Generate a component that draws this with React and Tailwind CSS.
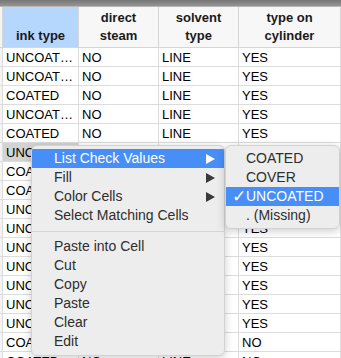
import React from 'react';

const rows = [
  ['UNCOAT…', 'NO', 'LINE', 'YES'],
  ['UNCOAT…', 'NO', 'LINE', 'YES'],
  ['COATED', 'NO', 'LINE', 'YES'],
  ['UNCOAT…', 'NO', 'LINE', 'YES'],
  ['COATED', 'NO', 'LINE', 'YES'],
  ['UNCOAT…', 'NO', 'LINE', 'YES'],
  ['COATED', 'NO', 'LINE', 'YES'],
  ['COATED', 'NO', 'LINE', 'YES'],
  ['UNCOAT…', 'NO', 'LINE', 'YES'],
  ['UNCOAT…', 'NO', 'LINE', 'YES'],
  ['UNCOAT…', 'NO', 'LINE', 'YES'],
  ['UNCOAT…', 'NO', 'LINE', 'YES'],
  ['UNCOAT…', 'NO', 'LINE', 'YES'],
  ['UNCOAT…', 'NO', 'LINE', 'YES'],
  ['UNCOAT…', 'NO', 'LINE', 'YES'],
  ['COATED', 'NO', 'LINE', 'NO'],
  ['COATED', 'NO', 'LINE', 'NO'],
];

const headers = [
  ['ink type'],
  ['direct', 'steam'],
  ['solvent', 'type'],
  ['type on', 'cylinder'],
];

const Arrow = ({ white }) => (
  <svg width="9" height="10" viewBox="0 0 9 10">
    <path d="M0 0 L9 5 L0 10 Z" fill={white ? '#ffffff' : '#3a3a3a'} />
  </svg>
);

const MenuItem = ({ label, sub, active }) => (
  <div
    className={`h-[19px] flex items-center pl-[22px] pr-[9px] ${
      active ? 'bg-[#478ef6] text-white' : 'text-[#2e2e2e]'
    }`}
  >
    <span className="flex-1">{label}</span>
    {sub && <Arrow white={active} />}
  </div>
);

export default function App() {
  return (
    <div
      className="relative w-[341px] h-[358px] overflow-hidden bg-white text-[13px]"
      style={{ fontFamily: '"Liberation Sans", Arial, sans-serif' }}
    >
      {/* Window top bar */}
      <div className="h-[7px] bg-gradient-to-b from-[#767676] to-[#959595] border-b border-[#b8b8b8]" />

      {/* Table */}
      <div className="grid grid-cols-[3px_76px_80px_80px_102px]">
        <div className="h-[41px] bg-[#f4f4f4] border-r border-b border-[#d6d6d6]" />
        {headers.map((h, i) => (
          <div
            key={i}
            className={`h-[41px] flex flex-col justify-end items-center pb-[2px] font-bold leading-[18px] text-[#1a1a1a] border-r border-b border-[#d6d6d6] ${
              i === 0 ? 'bg-[#b5d6fd]' : 'bg-[#f7f7f7]'
            }`}
          >
            {h.map((line) => (
              <span key={line}>{line}</span>
            ))}
          </div>
        ))}
        {rows.map((r, ri) => (
          <React.Fragment key={ri}>
            <div className="h-[19px] bg-[#f4f4f4] border-r border-b border-[#dcdcdc]" />
            {r.map((v, ci) => (
              <div
                key={ci}
                className={`h-[19px] flex items-center pl-[3px] leading-none text-black whitespace-nowrap overflow-hidden border-r border-b border-[#dcdcdc] ${
                  ri === 5 && ci === 0 ? 'bg-[#d3d3d3]' : ''
                }`}
              >
                {v}
              </div>
            ))}
          </React.Fragment>
        ))}
      </div>

      {/* Context menu */}
      <div className="absolute left-[31px] top-[145px] w-[194px] h-[211px] rounded-[6px] bg-[#ededed] border border-[#d2d2d2] shadow-[0_2px_8px_rgba(0,0,0,0.2)] text-[14px] py-[3px] overflow-hidden">
        <MenuItem label="List Check Values" sub active />
        <MenuItem label="Fill" sub />
        <MenuItem label="Color Cells" sub />
        <MenuItem label="Select Matching Cells" />
        <div className="h-[12px] flex items-center">
          <div className="w-full h-px bg-[#d6d6d6]" />
        </div>
        <MenuItem label="Paste into Cell" />
        <MenuItem label="Cut" />
        <MenuItem label="Copy" />
        <MenuItem label="Paste" />
        <MenuItem label="Clear" />
        <MenuItem label="Edit" />
      </div>

      {/* Submenu */}
      <div className="absolute left-[225px] top-[145px] w-[115px] h-[84px] rounded-[6px] bg-[#ededed] border border-[#d2d2d2] shadow-[0_2px_8px_rgba(0,0,0,0.2)] text-[14px] py-[3px] overflow-hidden">
        {['COATED', 'COVER', 'UNCOATED', '. (Missing)'].map((v) => {
          const on = v === 'UNCOATED';
          return (
            <div
              key={v}
              className={`h-[19px] flex items-center ${
                on ? 'bg-[#478ef6] text-white' : 'text-[#2e2e2e]'
              }`}
            >
              <span className="w-[20px] pl-[6px] text-[17px] leading-none">{on ? '✓' : ''}</span>
              <span>{v}</span>
            </div>
          );
        })}
      </div>
    </div>
  );
}
